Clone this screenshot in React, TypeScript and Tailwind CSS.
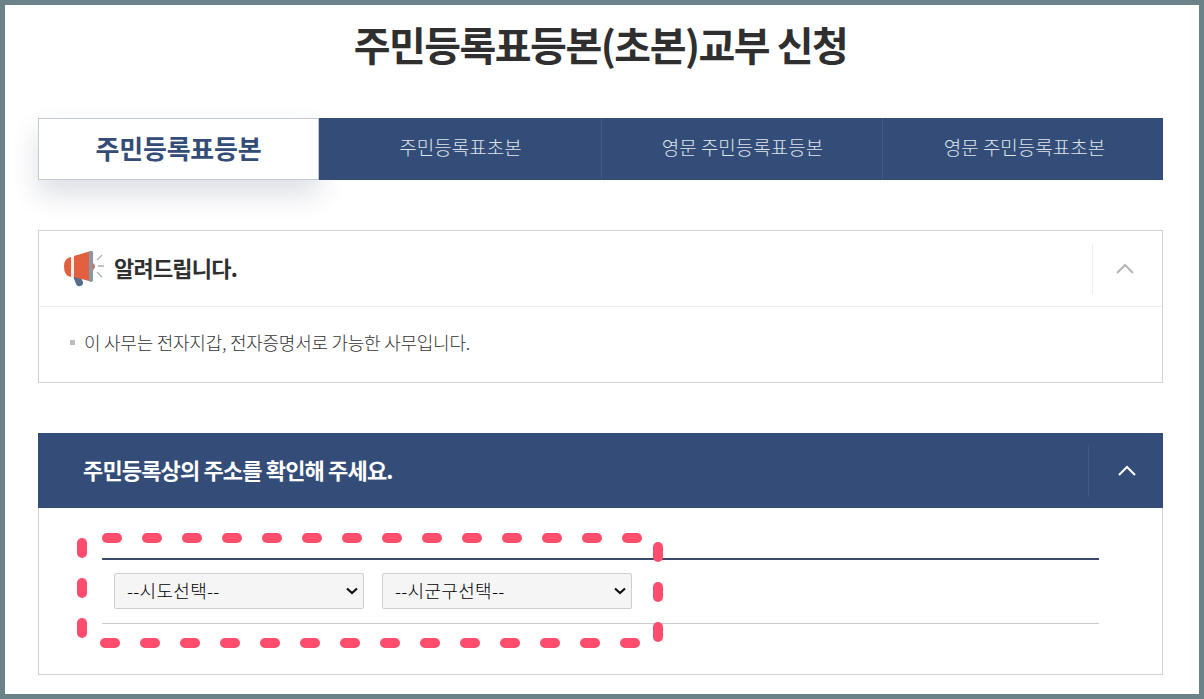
const KR = "font-['Noto_Sans_CJK_KR',sans-serif]";

function Megaphone() {
  return (
    <svg width="40" height="36" viewBox="0 0 40 36" className="shrink-0">
      <path d="M9 25 L15 23 L19 31 Q19.5 34 16.5 35 Q13.5 36 12 33 Z" fill="#566c8a" />
      <path d="M7 6 Q0 7 0 15.5 Q0 25 7 26 Z" fill="#e2603f" />
      <path d="M7 6 H10 V26 H7 Z" fill="#f1eeea" />
      <path d="M10 5 L25 0.5 V30 L10 26 Z" fill="#e2603f" />
      <path d="M25 0.5 Q27 -1 29 0.5 V30 Q27 32 25 30 Z" fill="#8c97a6" />
      <path d="M29 12 Q33 15 29 19 Z" fill="#d9674d" />
      <path d="M33 9 L38 4 M34 15 H40 M33 21 L38 26" stroke="#a9afb7" strokeWidth="1.3" fill="none" />
    </svg>
  );
}

function Chevron({ className }: { className: string }) {
  return (
    <svg width="18" height="11" viewBox="0 0 18 11" className={className} fill="none">
      <path d="M1 10 L9 2 L17 10" stroke="currentColor" strokeWidth="2" />
    </svg>
  );
}

function Picker({ label }: { label: string }) {
  return (
    <div className="relative w-[250px]">
      <select className="h-[36px] w-full appearance-none rounded-[2px] border border-[#cfcfcf] bg-[#f5f5f5] pl-[12px] text-[18px] font-light tracking-[0.3px] text-black">
        <option>{label}</option>
      </select>
      <svg width="12" height="8" viewBox="0 0 12 8" className="absolute right-[6px] top-[14px] pointer-events-none" fill="none">
        <path d="M1 1.5 L6 6 L11 1.5" stroke="#111111" strokeWidth="2.2" />
      </svg>
    </div>
  );
}

function Annotation() {
  const top = Array.from({ length: 14 }, (_, i) => 102 + i * 40);
  const bottom = Array.from({ length: 14 }, (_, i) => 100 + i * 40);
  return (
    <svg className="absolute left-[-5px] top-[-5px] pointer-events-none" width="1204" height="699">
      {top.map((x) => (
        <rect key={x} x={x} y="533" width="20" height="10" rx="5" fill="#ff4d6d" />
      ))}
      {bottom.map((x) => (
        <rect key={x} x={x} y="638" width="20" height="10" rx="5" fill="#ff4d6d" />
      ))}
      {[538, 578, 618].map((y) => (
        <rect key={y} x="77" y={y} width="10" height="20" rx="5" fill="#ff4d6d" />
      ))}
      {[542, 582, 622].map((y) => (
        <rect key={y} x="653" y={y} width="10" height="20" rx="5" fill="#ff4d6d" />
      ))}
    </svg>
  );
}

export default function App() {
  return (
    <div className={`${KR} relative w-[1204px] h-[699px] overflow-hidden border-[5px] border-[#6b8388] bg-white`}>
      <div className="pl-[33px] pr-[36px]">
        <h1 className="h-[113px] pt-[12px] text-center text-[40px] leading-[54px] font-bold tracking-[-1.5px] text-[#2f2f2f]">
          주민등록표등본(초본)교부 신청
        </h1>

        <div className="flex h-[62px]">
          <div className="flex w-[281px] items-center justify-center border border-[#c5c9d3] bg-white pb-[4px] text-[26px] font-bold tracking-[-0.2px] text-[#334d78] shadow-[0_14px_28px_rgba(40,50,80,0.16)]">
            주민등록표등본
          </div>
          <div className="flex flex-1 bg-[#334d78] text-[19px] font-light text-[#dfe4ec]">
            <div className="flex w-[283px] items-center justify-center border-r border-[#425b85] pb-[3px] pl-[1px]">주민등록표초본</div>
            <div className="flex w-[281px] items-center justify-center border-r border-[#425b85] pb-[3px] pl-[1px]">영문 주민등록표등본</div>
            <div className="flex flex-1 items-center justify-center pb-[3px] pl-[3px]">영문 주민등록표초본</div>
          </div>
        </div>

        <div className="mt-[50px] h-[153px] border border-[#d2d2d2]">
          <div className="flex h-[76px] items-center border-b border-[#eeeeee] pl-[25px]">
            <Megaphone />
            <span className="ml-[10px] flex-1 pb-[3px] text-[22px] font-bold tracking-[-0.8px] text-[#2f2f2f]">알려드립니다.</span>
            <div className="flex h-[50px] w-[70px] items-center justify-center border-l border-[#eeeeee] pr-[5px]">
              <Chevron className="text-[#b5b5b5]" />
            </div>
          </div>
          <div className="flex h-[69px] items-center pl-[31px] pt-[2px] text-[18px] font-light tracking-[-0.25px] text-[#333333]">
            <span className="mr-[9px] h-[5px] w-[5px] bg-[#bdbdbd]" />
            이 사무는 전자지갑, 전자증명서로 가능한 사무입니다.
          </div>
        </div>

        <div className="mt-[50px] flex h-[75px] items-center bg-[#334d78] pl-[45px]">
          <span className="flex-1 pb-[3px] text-[22px] font-bold tracking-[-0.85px] text-white">주민등록상의 주소를 확인해 주세요.</span>
          <div className="flex h-[52px] w-[75px] items-center justify-center border-l border-[#425b85] pl-[2px]">
            <Chevron className="text-white" />
          </div>
        </div>
        <div className="h-[167px] border border-t-0 border-[#d2d2d2] px-[63px] pt-[50px]">
          <div className="flex h-[66px] items-center gap-[18px] border-t-2 border-b border-t-[#3a4a68] border-b-[#cccccc] pb-[2px] pl-[12px]">
            <Picker label="--시도선택--" />
            <Picker label="--시군구선택--" />
          </div>
        </div>
      </div>
      <Annotation />
    </div>
  );
}
